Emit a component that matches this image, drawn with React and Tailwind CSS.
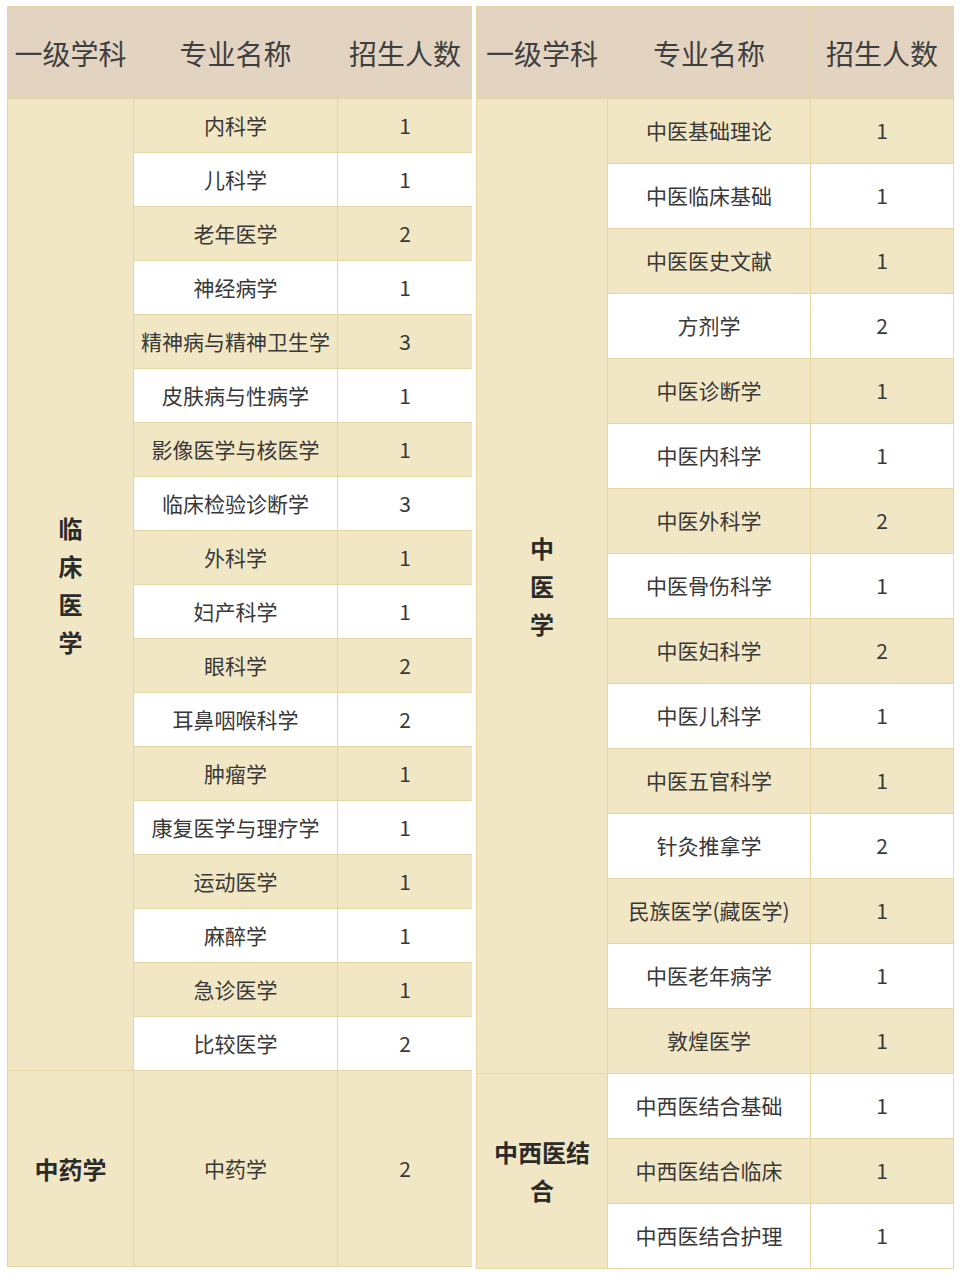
import React from 'react';

const left = [
    ['内科学', 1], ['儿科学', 1], ['老年医学', 2], ['神经病学', 1], ['精神病与精神卫生学', 3],
    ['皮肤病与性病学', 1], ['影像医学与核医学', 1], ['临床检验诊断学', 3], ['外科学', 1], ['妇产科学', 1],
    ['眼科学', 2], ['耳鼻咽喉科学', 2], ['肿瘤学', 1], ['康复医学与理疗学', 1], ['运动医学', 1],
    ['麻醉学', 1], ['急诊医学', 1], ['比较医学', 2],
];

const right = [
    ['中医基础理论', 1], ['中医临床基础', 1], ['中医医史文献', 1], ['方剂学', 2], ['中医诊断学', 1],
    ['中医内科学', 1], ['中医外科学', 2], ['中医骨伤科学', 1], ['中医妇科学', 2], ['中医儿科学', 1],
    ['中医五官科学', 1], ['针灸推拿学', 2], ['民族医学(藏医学)', 1], ['中医老年病学', 1], ['敦煌医学', 1],
];

const right2 = [['中西医结合基础', 1], ['中西医结合临床', 1], ['中西医结合护理', 1]];

const Head = ({ children }) => (
    <div className="bg-[#e3d4c1] flex items-center justify-center text-[28px] text-[#3f3f3f] whitespace-nowrap">
        {children}
    </div>
);

const Cell = ({ children, cream }) => (
    <div className={`${cream ? 'bg-[#f2e7c5]' : 'bg-white'} flex items-center justify-center text-[21px] text-[#383838] whitespace-nowrap`}>
        {children}
    </div>
);

const Group = ({ chars, span }) => (
    <div className={`${span} bg-[#f2e7c5] flex flex-col items-center justify-center text-[24px] font-bold leading-[38px] text-[#2b2b2b]`}>
        {chars.map((c, i) => <span key={i}>{c}</span>)}
    </div>
);

export default function App() {
    return (
        <div className="min-h-[1276px] bg-white pt-[6px] pl-[7px] flex items-start gap-[4px] font-['Noto_Sans_CJK_SC','Noto_Sans',sans-serif]">
            {/* left table */}
            <div className="grid grid-cols-[125px_203px_134px] grid-rows-[91px_repeat(18,53px)_195px] gap-px bg-[#e6d6a6] border border-[#e6d6a6] w-[465px]">
                <Head>一级学科</Head>
                <Head>专业名称</Head>
                <Head>招生人数</Head>
                <Group chars={['临', '床', '医', '学']} span="row-span-18" />
                {left.map(([name, n], i) => (
                    <React.Fragment key={name}>
                        <Cell cream={i % 2 === 0}>{name}</Cell>
                        <Cell cream={i % 2 === 0}>{n}</Cell>
                    </React.Fragment>
                ))}
                <Group chars={['中药学']} span="" />
                <Cell cream>中药学</Cell>
                <Cell cream>2</Cell>
            </div>

            {/* right table */}
            <div className="grid grid-cols-[130px_202px_142px] grid-rows-[91px_repeat(18,64px)] gap-px bg-[#e6d6a6] border border-[#e6d6a6] w-[478px]">
                <Head>一级学科</Head>
                <Head>专业名称</Head>
                <Head>招生人数</Head>
                <Group chars={['中', '医', '学']} span="row-span-15" />
                {right.map(([name, n], i) => (
                    <React.Fragment key={name}>
                        <Cell cream={i % 2 === 0}>{name}</Cell>
                        <Cell cream={i % 2 === 0}>{n}</Cell>
                    </React.Fragment>
                ))}
                <Group chars={['中西医结', '合']} span="row-span-3" />
                {right2.map(([name, n], i) => (
                    <React.Fragment key={name}>
                        <Cell cream={i % 2 === 1}>{name}</Cell>
                        <Cell cream={i % 2 === 1}>{n}</Cell>
                    </React.Fragment>
                ))}
            </div>
        </div>
    );
}
